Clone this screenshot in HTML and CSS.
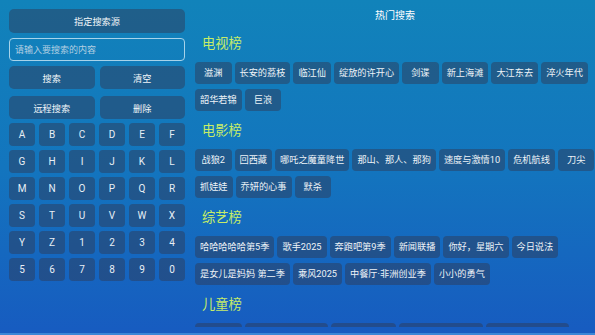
FILE: index.html
```html
<!DOCTYPE html>
<html lang="zh-CN">
<head>
<meta charset="utf-8">
<title>热门搜索</title>
<link rel="stylesheet" href="styles.css">
</head>
<body>
<div class="screen">
  <div class="main">
    <aside class="side">
      <div class="btn wide">指定搜索源</div>
      <input class="search" type="text" placeholder="请输入要搜索的内容">
      <div class="pair">
        <div class="btn">搜索</div>
        <div class="btn">清空</div>
      </div>
      <div class="pair pair-last">
        <div class="btn">远程搜索</div>
        <div class="btn">删除</div>
      </div>
      <div class="keys">
        <div class="key">A</div><div class="key">B</div><div class="key">C</div><div class="key">D</div><div class="key">E</div><div class="key">F</div>
        <div class="key">G</div><div class="key">H</div><div class="key">I</div><div class="key">J</div><div class="key">K</div><div class="key">L</div>
        <div class="key">M</div><div class="key">N</div><div class="key">O</div><div class="key">P</div><div class="key">Q</div><div class="key">R</div>
        <div class="key">S</div><div class="key">T</div><div class="key">U</div><div class="key">V</div><div class="key">W</div><div class="key">X</div>
        <div class="key">Y</div><div class="key">Z</div><div class="key">1</div><div class="key">2</div><div class="key">3</div><div class="key">4</div>
        <div class="key">5</div><div class="key">6</div><div class="key">7</div><div class="key">8</div><div class="key">9</div><div class="key">0</div>
      </div>
    </aside>
    <section class="hot">
      <div class="hot-title">热门搜索</div>

      <h2 class="cat first">电视榜</h2>
      <div class="tags">
        <span class="tag">滋渊</span><span class="tag">长安的荔枝</span><span class="tag">临江仙</span><span class="tag">绽放的许开心</span><span class="tag">剑谍</span><span class="tag">新上海滩</span><span class="tag">大江东去</span><span class="tag">淬火年代</span><span class="tag">韶华若锦</span><span class="tag">巨浪</span>
      </div>

      <h2 class="cat">电影榜</h2>
      <div class="tags">
        <span class="tag">战狼2</span><span class="tag">回西藏</span><span class="tag">哪吒之魔童降世</span><span class="tag">那山、那人、那狗</span><span class="tag">速度与激情10</span><span class="tag">危机航线</span><span class="tag">刀尖</span><span class="tag">抓娃娃</span><span class="tag">乔妍的心事</span><span class="tag">默杀</span>
      </div>

      <h2 class="cat">综艺榜</h2>
      <div class="tags">
        <span class="tag">哈哈哈哈哈第5季</span><span class="tag">歌手2025</span><span class="tag">奔跑吧第9季</span><span class="tag">新闻联播</span><span class="tag">你好，星期六</span><span class="tag">今日说法</span><span class="tag">是女儿是妈妈 第二季</span><span class="tag">乘风2025</span><span class="tag">中餐厅·非洲创业季</span><span class="tag">小小的勇气</span>
      </div>

      <h2 class="cat">儿童榜</h2>
      <div class="tags">
        <span class="tag">小猪佩奇</span><span class="tag">熊出没之探险日记</span><span class="tag">宝宝巴士儿歌</span><span class="tag">海底小纵队第八季</span><span class="tag">超级飞侠第十七季</span>
      </div>
    </section>
  </div>
  <div class="strip"></div>
</div>
</body>
</html>
```

FILE: styles.css
```css
html, body {
  margin: 0;
  padding: 0;
}

body {
  font-family: Roboto, "Noto Sans CJK SC", sans-serif;
  color: #ffffff;
}

.screen {
  width: 595px;
  height: 335px;
  overflow: hidden;
  display: flex;
  flex-direction: column;
  background: linear-gradient(180deg, #1183ba 0%, #1375be 50%, #175bc0 100%);
}

.main {
  display: flex;
  height: 333px;
}

.strip {
  height: 2px;
  background: #3a86d6;
}

/* ---------- left panel ---------- */
.side {
  width: 176px;
  padding: 9px 0 0 9px;
  display: flex;
  flex-direction: column;
}

.btn {
  height: 23px;
  border-radius: 5px;
  background: rgba(45, 60, 90, 0.5);
  display: flex;
  align-items: center;
  justify-content: center;
  font-size: 9.2px;
  color: #f2f6f9;
}

.btn.wide {
  height: 24px;
  margin-bottom: 5px;
}

.search {
  box-sizing: border-box;
  height: 23px;
  margin: 0 0 5px 0;
  padding: 0 5px;
  border: 1px solid #a7d3ea;
  border-radius: 4px;
  background: transparent;
  font-family: Roboto, "Noto Sans CJK SC", sans-serif;
  font-size: 9px;
  color: #ffffff;
  outline: none;
}

.search::placeholder {
  color: #b3cfe2;
}

.pair {
  display: grid;
  grid-template-columns: 1fr 1fr;
  gap: 5px;
  margin-bottom: 7px;
}

.pair-last {
  margin-bottom: 4px;
}

.keys {
  display: grid;
  grid-template-columns: repeat(6, 1fr);
  gap: 4px 4px;
}

.key {
  height: 23px;
  border-radius: 4px;
  background: rgba(45, 60, 90, 0.5);
  display: flex;
  align-items: center;
  justify-content: center;
  font-size: 10px;
  color: #e8eff5;
}

/* ---------- right panel ---------- */
.hot {
  box-sizing: border-box;
  width: 400px;
  height: 327px;
  margin-left: 10px;
  padding-top: 10px;
  overflow: hidden;
}

.hot-title {
  text-align: center;
  font-size: 10px;
  line-height: 12px;
  color: #ffffff;
}

.cat {
  margin: 10px 0 8px 0;
  padding-left: 7px;
  font-size: 13.3px;
  line-height: 20px;
  font-weight: normal;
  color: #c6ec68;
}

.cat.first {
  margin-top: 12px;
}

.tags {
  display: flex;
  flex-wrap: wrap;
  gap: 5px 3px;
}

.tag {
  box-sizing: border-box;
  min-width: 36.5px;
  height: 22px;
  line-height: 22px;
  padding: 0 5px;
  border-radius: 4px;
  background: rgba(45, 60, 90, 0.5);
  text-align: center;
  font-size: 9.2px;
  color: #eef3f7;
  white-space: nowrap;
}
```
